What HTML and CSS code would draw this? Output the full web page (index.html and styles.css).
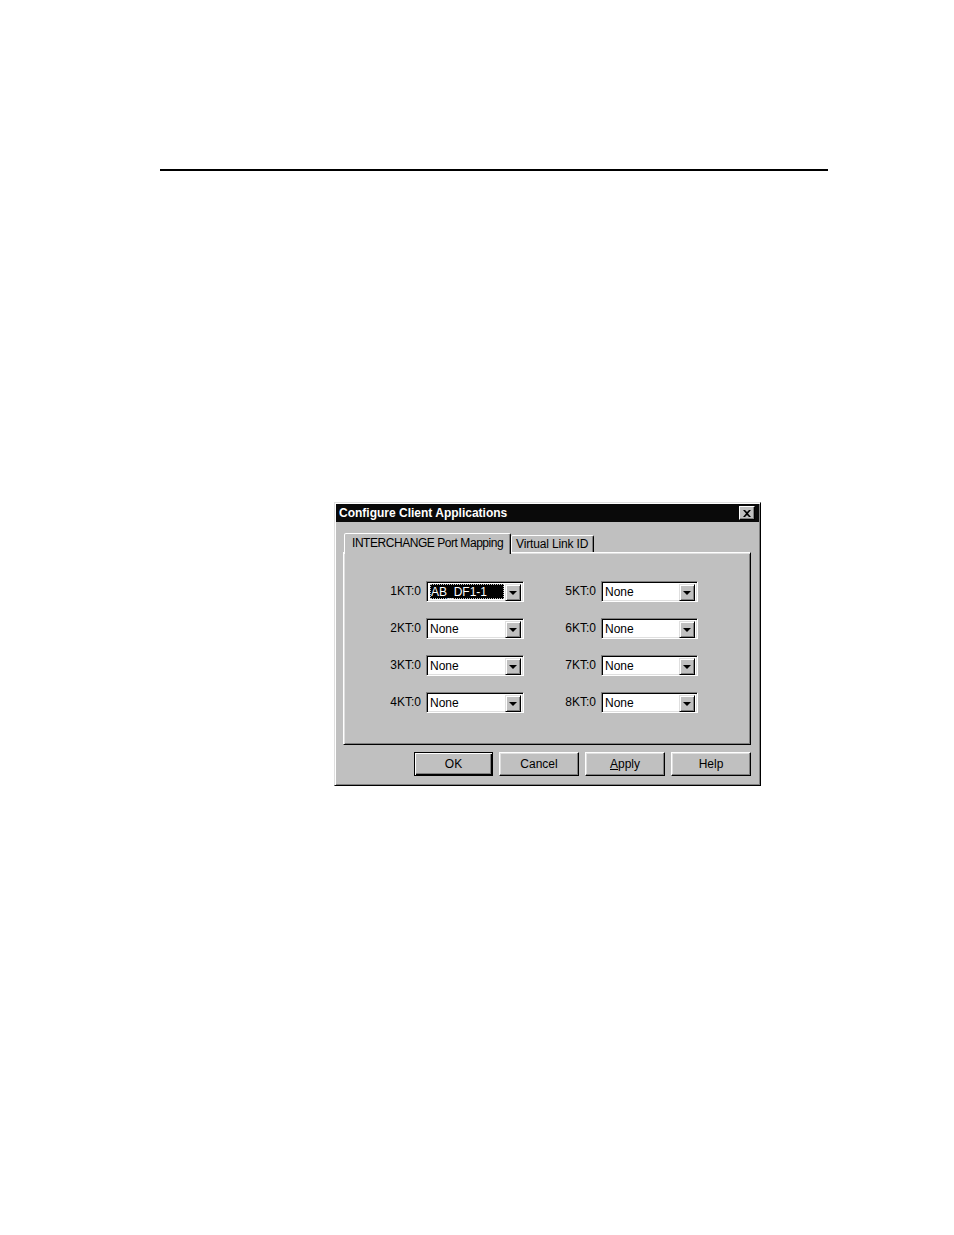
FILE: index.html
```html
<!DOCTYPE html>
<html>
<head>
<meta charset="utf-8">
<link rel="stylesheet" href="styles.css">
</head>
<body>
<div class="rule"></div>
<div class="dialog">
  <div class="titlebar">
    <span class="title">Configure Client Applications</span>
    <span class="close"><svg width="8" height="7" viewBox="0 0 8 7"><path d="M0 0h2l2 2 2-2h2L5 3.5 8 7H6L4 5 2 7H0l3-3.5z" fill="#000"/></svg></span>
  </div>
  <div class="content">
    <div class="tabs">
      <div class="tab active">INTERCHANGE Port Mapping</div>
      <div class="tab">Virtual Link ID</div>
    </div>
    <div class="panel">
      <div class="grid">
        <span class="lbl">1KT:0</span>
        <div class="combo"><span class="field"><span class="sel">AB_DF1-1</span></span><span class="drop"><i></i></span></div>
        <span class="lbl">5KT:0</span>
        <div class="combo"><span class="field">None</span><span class="drop"><i></i></span></div>

        <span class="lbl">2KT:0</span>
        <div class="combo"><span class="field">None</span><span class="drop"><i></i></span></div>
        <span class="lbl">6KT:0</span>
        <div class="combo"><span class="field">None</span><span class="drop"><i></i></span></div>

        <span class="lbl">3KT:0</span>
        <div class="combo"><span class="field">None</span><span class="drop"><i></i></span></div>
        <span class="lbl">7KT:0</span>
        <div class="combo"><span class="field">None</span><span class="drop"><i></i></span></div>

        <span class="lbl">4KT:0</span>
        <div class="combo"><span class="field">None</span><span class="drop"><i></i></span></div>
        <span class="lbl">8KT:0</span>
        <div class="combo"><span class="field">None</span><span class="drop"><i></i></span></div>
      </div>
    </div>
    <div class="buttons">
      <button class="btn default">OK</button>
      <button class="btn">Cancel</button>
      <button class="btn"><u>A</u>pply</button>
      <button class="btn">Help</button>
    </div>
  </div>
</div>
</body>
</html>
```

FILE: styles.css
```css
html, body {
  margin: 0;
  padding: 0;
  background: #fff;
  font-family: "Liberation Sans", Arial, sans-serif;
  font-size: 12px;
  color: #000;
}

.rule {
  margin: 169px 0 0 160px;
  width: 668px;
  height: 2px;
  background: #000;
}

.dialog {
  margin: 331px 0 0 334px;
  width: 427px;
  height: 284px;
  box-sizing: border-box;
  background: #c0c0c0;
  border: 1px solid;
  border-color: #dfdfdf #000 #000 #dfdfdf;
  box-shadow: inset 1px 1px #fff, inset -1px -1px #808080;
  padding: 1px;
}

.titlebar {
  height: 18px;
  background: #0a0a0a;
  display: flex;
  align-items: center;
  justify-content: space-between;
  padding: 0 4px 0 3px;
}

.title {
  color: #fff;
  font-weight: bold;
  font-size: 12px;
  line-height: 18px;
}

.close {
  width: 16px;
  height: 14px;
  box-sizing: border-box;
  background: #c0c0c0;
  border: 1px solid;
  border-color: #fff #000 #000 #fff;
  box-shadow: inset -1px -1px #808080;
  display: flex;
  align-items: center;
  justify-content: center;
}

.content {
  padding: 11px 8px 0 7px;
}

.tabs {
  display: flex;
  align-items: flex-end;
  height: 19px;
  padding-left: 1px;
  position: relative;
  z-index: 1;
}

.tab {
  height: 17px;
  box-sizing: border-box;
  border: 1px solid;
  border-bottom: none;
  border-color: #fff #000 transparent #fff;
  border-radius: 2px 2px 0 0;
  box-shadow: inset -1px 0 #808080;
  padding: 1px 5px 0 4px;
  line-height: 15px;
  background: #c0c0c0;
  white-space: nowrap;
  letter-spacing: -0.15px;
}

.tab.active {
  height: 21px;
  margin-bottom: -2px;
  padding: 2px 4px 0 7px;
  width: 167px;
  letter-spacing: -0.45px;
}

.panel {
  height: 193px;
  box-sizing: border-box;
  border: 1px solid;
  border-color: #fff #000 #000 #fff;
  box-shadow: inset 1px 1px #dfdfdf, inset -1px -1px #808080;
  padding-top: 28px;
}

.grid {
  display: grid;
  grid-template-columns: 82px 98px 77px 97px;
  grid-auto-rows: 21px;
  row-gap: 16px;
}

.lbl {
  text-align: right;
  padding-right: 5px;
  line-height: 21px;
}

.combo {
  display: flex;
  height: 21px;
  box-sizing: border-box;
  border: 1px solid;
  border-color: #808080 #fff #fff #808080;
  box-shadow: inset 1px 1px #000, inset -1px -1px #dfdfdf;
  background: #fff;
  padding: 2px;
}

.field {
  flex: 1;
  line-height: 17px;
  padding-left: 1px;
  white-space: nowrap;
  overflow: hidden;
  display: flex;
}

.sel {
  flex: 1;
  background: #000;
  color: #fff;
  outline: 1px dotted #c0c0c0;
  outline-offset: -1px;
  padding-left: 1px;
  margin-right: 1px;
}

.drop {
  width: 16px;
  height: 17px;
  box-sizing: border-box;
  background: #c0c0c0;
  border: 1px solid;
  border-color: #dfdfdf #000 #000 #dfdfdf;
  box-shadow: inset 1px 1px #fff, inset -1px -1px #808080;
  display: flex;
  align-items: center;
  justify-content: center;
}

.drop i {
  width: 0;
  height: 0;
  border-left: 4px solid transparent;
  border-right: 4px solid transparent;
  border-top: 4px solid #000;
  margin-top: 1px;
}

.buttons {
  display: flex;
  justify-content: flex-end;
  gap: 6px;
  margin-top: 7px;
}

.btn {
  width: 80px;
  height: 24px;
  box-sizing: border-box;
  font-family: "Liberation Sans", Arial, sans-serif;
  font-size: 12px;
  color: #000;
  background: #c0c0c0;
  border: 1px solid;
  border-color: #fff #000 #000 #fff;
  box-shadow: inset -1px -1px #808080, inset 1px 1px #dfdfdf;
  padding: 0;
}

.btn.default {
  width: 79px;
  border: 1px solid #000;
  box-shadow: inset 1px 1px #fff, inset -1px -1px #000, inset -2px -2px #808080;
}

.btn u {
  text-decoration: underline;
}
```
